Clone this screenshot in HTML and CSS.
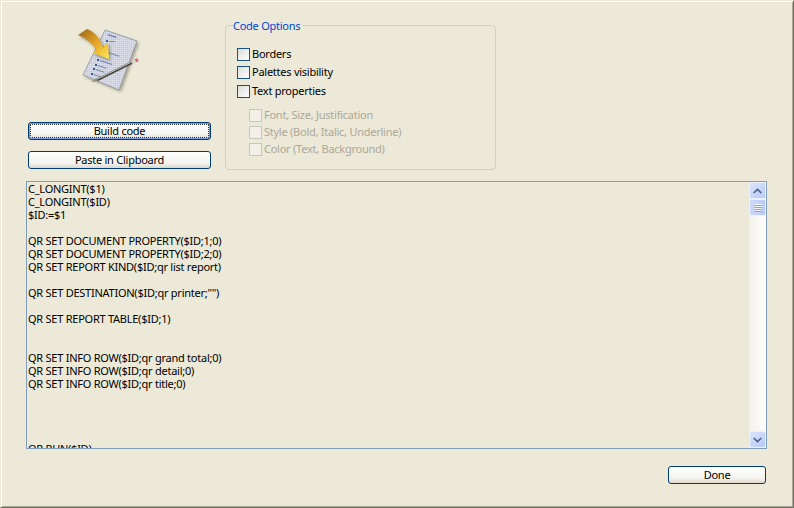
FILE: index.html
```html
<!DOCTYPE html>
<html lang="en">
<head>
<meta charset="utf-8">
<title>Code Options</title>
<link rel="stylesheet" href="styles.css">
</head>
<body>
<div class="window">
  <div class="top">
    <div class="actions">
      <svg class="logo" width="80" height="80" viewBox="3 10 80 80" aria-hidden="true">
        <defs>
          <pattern id="dots" width="2" height="2" patternUnits="userSpaceOnUse">
            <rect width="2" height="2" fill="#d8dbe6"/>
            <rect width="1" height="1" fill="#bfc4d5"/>
          </pattern>
          <linearGradient id="arrow" gradientUnits="userSpaceOnUse" x1="6" y1="18" x2="34" y2="44">
            <stop offset="0" stop-color="#a8711c"/>
            <stop offset="0.45" stop-color="#e3a325"/>
            <stop offset="1" stop-color="#ffe950"/>
          </linearGradient>
          <filter id="soft" x="-30%" y="-30%" width="160%" height="160%">
            <feGaussianBlur stdDeviation="1.6"/>
          </filter>
        </defs>
        <polygon points="30,15 62,26 44,75 8,60" transform="translate(2 2)" fill="#6f6a55" opacity="0.55" filter="url(#soft)"/>
        <polygon points="30,15 62,26 44,75 8,60" fill="url(#dots)" stroke="#8c90a0" stroke-width="0.8"/>
        <g fill="#3b5a9a">
          <rect x="33" y="19" width="9" height="1.4" transform="rotate(18 33 19)" opacity="0.7"/>
          <rect x="31" y="25" width="2" height="2"/>
          <rect x="34" y="26" width="6" height="1" opacity="0.6"/>
          <rect x="28" y="31" width="2" height="2"/>
          <rect x="33" y="37" width="12" height="1" opacity="0.6" transform="rotate(18 33 37)"/>
          <rect x="22" y="44" width="2" height="2"/>
          <rect x="25" y="45" width="13" height="1" opacity="0.7" transform="rotate(18 25 45)"/>
          <rect x="20" y="49" width="2" height="2"/>
          <rect x="23" y="50" width="9" height="1" opacity="0.6" transform="rotate(18 23 50)"/>
          <rect x="18" y="53" width="2" height="2"/>
          <rect x="21" y="54" width="9" height="1" opacity="0.6" transform="rotate(18 21 54)"/>
          <rect x="16" y="58" width="2" height="2"/>
          <rect x="19" y="59" width="8" height="1" opacity="0.6" transform="rotate(18 19 59)"/>
        </g>
        <path d="M3 20 L12 14 C20 17 25 24 28 32 L33 27 L34 44 L18 38 L21 34 C17 28 11 23 3 20 Z" transform="translate(1.5 2)" fill="#4a4535" opacity="0.5" filter="url(#soft)"/>
        <path d="M3 20 L12 14 C20 17 25 24 28 32 L33 27 L34 44 L18 38 L21 34 C17 28 11 23 3 20 Z" fill="url(#arrow)"/>
        <line x1="22" y1="65" x2="57" y2="47.5" stroke="#4a4a44" stroke-width="3"/>
        <line x1="22" y1="64.2" x2="57" y2="46.7" stroke="#c9c9c2" stroke-width="1"/>
        <polygon points="16,67 21,63.5 23,66" fill="#8a8678"/>
        <line x1="57" y1="47.5" x2="60.5" y2="45.8" stroke="#d6d5c8" stroke-width="3.4"/>
        <line x1="60.5" y1="45.8" x2="63" y2="44.6" stroke="#d9666e" stroke-width="3.2"/>
      </svg>
      <button class="btn btn-focus" type="button">Build code</button>
      <button class="btn" type="button">Paste in Clipboard</button>
    </div>
    <fieldset class="options">
      <legend>Code Options</legend>
      <label class="check"><span class="box"></span>Borders</label>
      <label class="check"><span class="box"></span>Palettes visibility</label>
      <label class="check"><span class="box"></span>Text properties</label>
      <div class="subchecks">
        <label class="check off"><span class="box"></span>Font, Size, Justification</label>
        <label class="check off"><span class="box"></span>Style (Bold, Italic, Underline)</label>
        <label class="check off"><span class="box"></span>Color (Text, Background)</label>
      </div>
    </fieldset>
  </div>
  <div class="editor">
    <div class="code">C_LONGINT($1)
C_LONGINT($ID)
$ID:=$1

QR SET DOCUMENT PROPERTY($ID;1;0)
QR SET DOCUMENT PROPERTY($ID;2;0)
QR SET REPORT KIND($ID;qr list report)

QR SET DESTINATION($ID;qr printer;"")

QR SET REPORT TABLE($ID;1)


QR SET INFO ROW($ID;qr grand total;0)
QR SET INFO ROW($ID;qr detail;0)
QR SET INFO ROW($ID;qr title;0)




QR RUN($ID)</div>
    <div class="scrollbar">
      <span class="sb-btn">
        <svg width="9" height="6" viewBox="0 0 9 6" aria-hidden="true"><path d="M0.7 5 L4.5 1.4 L8.3 5" fill="none" stroke="#4d6185" stroke-width="1.7"/></svg>
      </span>
      <span class="sb-thumb"><i></i><i></i><i></i><i></i></span>
      <span class="sb-track"></span>
      <span class="sb-btn">
        <svg width="9" height="6" viewBox="0 0 9 6" aria-hidden="true"><path d="M0.7 1 L4.5 4.6 L8.3 1" fill="none" stroke="#4d6185" stroke-width="1.7"/></svg>
      </span>
    </div>
  </div>
  <div class="footer">
    <button class="btn btn-done" type="button">Done</button>
  </div>
</div>
</body>
</html>
```
FILE: styles.css
```css
* { box-sizing: border-box; }
html, body { margin: 0; padding: 0; }
body { width: 794px; height: 508px; overflow: hidden; }
.window {
  width: 794px;
  height: 508px;
  background: #ece9d8;
  border-style: solid;
  border-width: 1px;
  border-color: #ece9d8 #716f64 #716f64 #ece9d8;
  box-shadow: inset 1px 1px 0 #ffffff, inset -1px -1px 0 #aca899;
  font: 11px/13px "Noto Sans", Tahoma, sans-serif;
  letter-spacing: -0.25px;
  color: #000;
  display: flex;
  flex-direction: column;
  padding: 1px 26px 0 25px;
}
.top {
  height: 179px;
  display: flex;
  padding: 15px 0 0 2px;
  gap: 14px;
  flex: none;
}
.actions { width: 183px; display: flex; flex-direction: column; align-items: center; }
.logo { display: block; margin: 8px 0 0 -3px; flex: none; }
.btn {
  display: block;
  height: 18px;
  padding: 0 0 2px;
  background: linear-gradient(#ffffff, #f4f3ee 70%, #dcd8ca);
  border: 1px solid #003c74;
  border-radius: 3px;
  font: inherit;
  letter-spacing: inherit;
  color: #000;
  text-align: center;
}
.actions .btn { width: 183px; flex: none; }
.btn-focus {
  margin-top: 17px;
  box-shadow: inset 0 0 0 1px #7b98dc;
  outline: 1px dotted #333;
  outline-offset: -3px;
}
.btn-focus + .btn { margin-top: 11px; }
.options {
  width: 271px;
  height: 151px;
  margin: 2px 0 0;
  padding: 13px 11px 0;
  border: 1px solid #d0d0bf;
  border-radius: 4px;
}
.options legend { padding: 0 2px 0 0; margin-left: -4px; color: #0046d5; line-height: 13px; }
.check { display: flex; align-items: center; height: 18.5px; gap: 2px; padding-bottom: 2px; }
.box {
  width: 13px;
  height: 13px;
  flex: none;
  margin-top: 2px;
  border: 1px solid #1c5180;
  background: linear-gradient(135deg, #dcdcd7, #ffffff);
}
.subchecks { margin: 6px 0 0 12px; }
.subchecks .check { height: 17px; }
.off { color: #aca899; }
.off .box { border-color: #c9c7ba; background: #f2f0e6; }
.editor {
  height: 268px;
  flex: none;
  display: flex;
  border: 1px solid #7f9db9;
  overflow: hidden;
}
.code { flex: 1; padding: 0 0 0 1px; white-space: pre; overflow: hidden; }
.scrollbar {
  width: 17px;
  flex: none;
  display: flex;
  flex-direction: column;
  background: linear-gradient(90deg, #f3f1ec, #fefefb);
}
.sb-btn {
  height: 17px;
  flex: none;
  display: flex;
  align-items: center;
  justify-content: center;
  background: linear-gradient(135deg, #dbe5fc, #b7c9f7);
  border: 1px solid #ecf1fe;
  border-radius: 2px;
}
.sb-thumb {
  height: 17px;
  flex: none;
  display: flex;
  flex-direction: column;
  align-items: center;
  justify-content: center;
  gap: 1px;
  background: linear-gradient(90deg, #cdd9fb, #b9caf7);
  border: 1px solid #eef2fe;
  border-radius: 2px;
}
.sb-thumb i { display: block; width: 8px; height: 1px; background: #eef3fe; box-shadow: 0 1px 0 #8da6df; }
.sb-track { flex: 1; }
.footer { display: flex; justify-content: flex-end; padding: 17px 0 0; }
.btn-done { width: 98px; margin-right: 1px; }
```
